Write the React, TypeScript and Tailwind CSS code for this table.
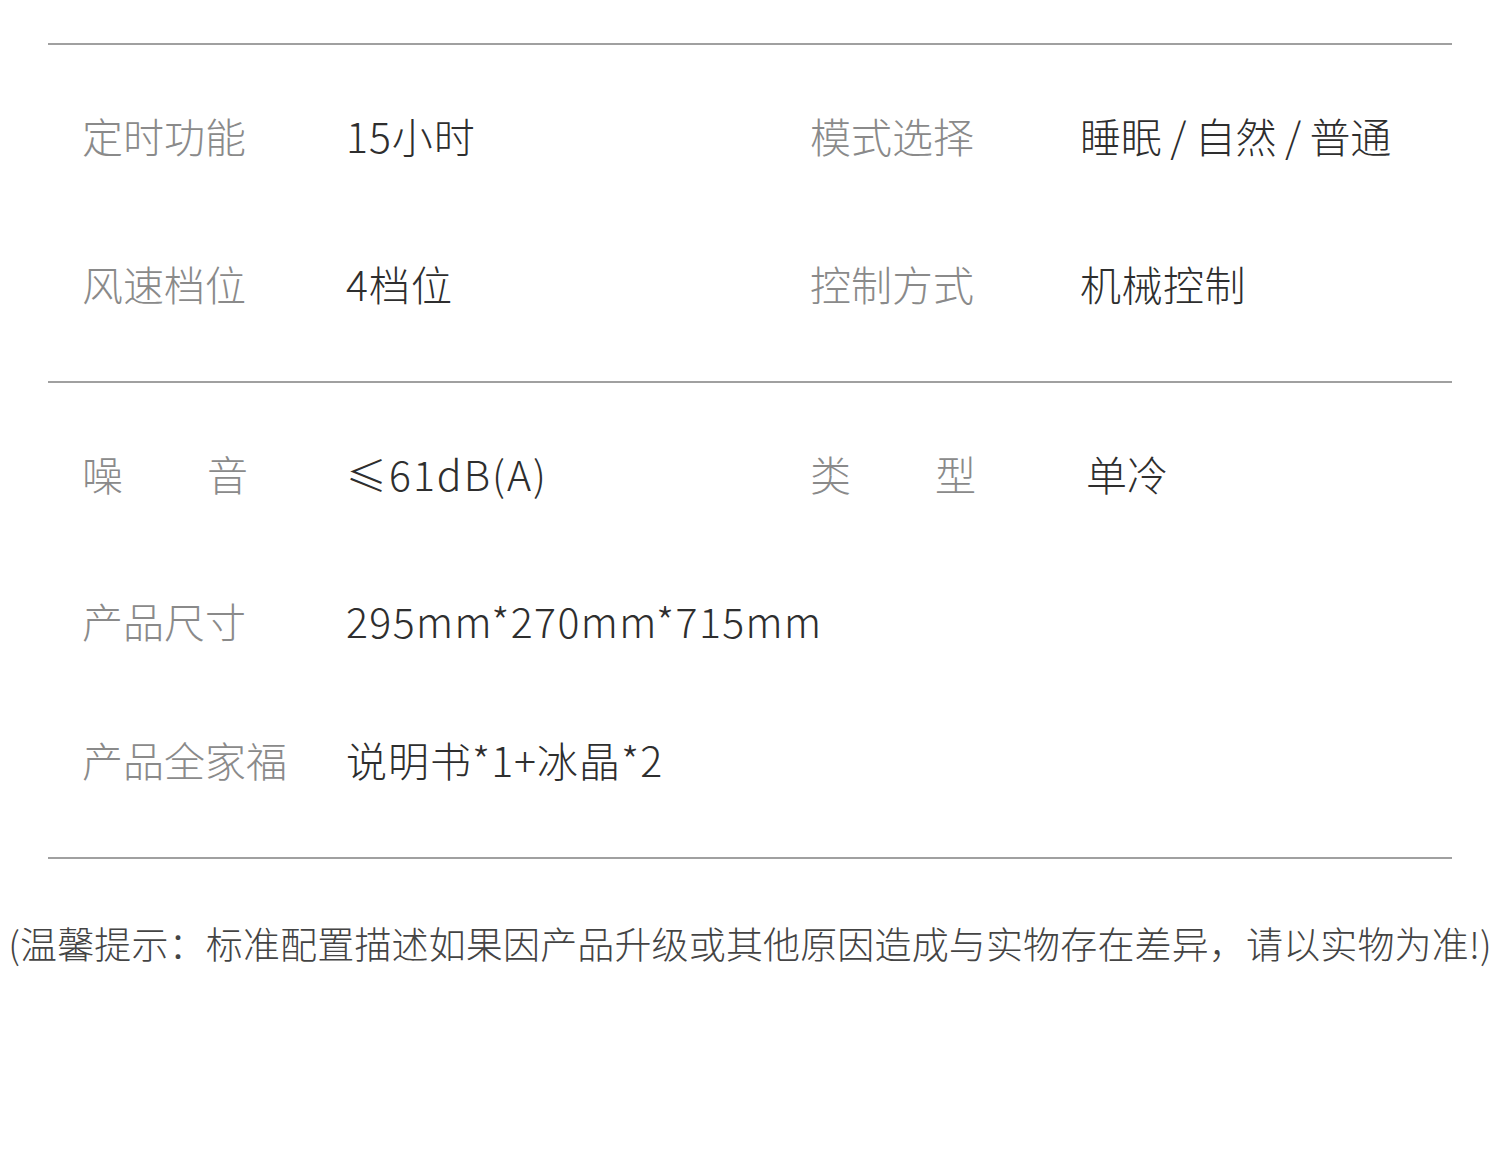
import React from "react";

const font = { fontFamily: '"Noto Sans CJK SC", "Noto Sans", sans-serif' };

function Label({ text, spaced }: { text: string; spaced?: boolean }) {
  if (spaced) {
    const chars = text.split("");
    return (
      <div className="w-[166px] flex justify-between text-[#8a8a8a]">
        {chars.map((c, i) => (
          <span key={i}>{c}</span>
        ))}
      </div>
    );
  }
  return <div className="text-[#8a8a8a] whitespace-nowrap">{text}</div>;
}

function Cell({
  label,
  value,
  spaced,
  labelW,
  valueW,
  valueCls,
}: {
  label: string;
  value: string;
  spaced?: boolean;
  labelW: string;
  valueW?: string;
  valueCls?: string;
}) {
  return (
    <div className="flex items-center">
      <div className={labelW}>
        <Label text={label} spaced={spaced} />
      </div>
      <div className={`text-[#2e2e2e] whitespace-nowrap ${valueW ?? ""} ${valueCls ?? ""}`}>{value}</div>
    </div>
  );
}

export default function App() {
  return (
    <div
      className="w-[1500px] h-[1154px] bg-white overflow-hidden text-[41px] leading-none font-light"
      style={font}
    >
      <div className="px-[48px] pt-[43px]">
        <div className="h-[2px] bg-[#a0a0a0]" />
        <div className="pl-[34px] pt-[16px] pb-[24px]">
          <div className="h-[148px] flex items-center">
            <Cell label="定时功能" value="15小时" labelW="w-[264px]" valueW="w-[464px]" valueCls="tracking-[1px]" />
            <Cell label="模式选择" value="睡眠 / 自然 / 普通" labelW="w-[270px]" valueCls="tracking-[-0.3px]" />
          </div>
          <div className="h-[148px] flex items-center">
            <Cell label="风速档位" value="4档位" labelW="w-[264px]" valueW="w-[464px]" valueCls="tracking-[1px]" />
            <Cell label="控制方式" value="机械控制" labelW="w-[270px]" valueCls="tracking-[0.5px]" />
          </div>
        </div>
        <div className="h-[2px] bg-[#a0a0a0]" />
        <div className="pl-[34px] pt-[17px] pb-[33px]">
          <div className="h-[146px] flex items-center">
            <Cell label="噪音" spaced value="≤61dB(A)" labelW="w-[264px]" valueW="w-[464px]" valueCls="tracking-[2px]" />
            <Cell label="类型" spaced value="单冷" labelW="w-[276px]" />
          </div>
          <div className="h-[148px] flex items-center">
            <Cell label="产品尺寸" value="295mm*270mm*715mm" labelW="w-[264px]" valueCls="tracking-[1.4px]" />
          </div>
          <div className="h-[130px] flex items-center">
            <Cell label="产品全家福" value="说明书*1+冰晶*2" labelW="w-[264px]" valueCls="tracking-[1px]" />
          </div>
        </div>
        <div className="h-[2px] bg-[#a0a0a0]" />
      </div>
      <div className="mt-[59px] flex justify-center">
        <div className="text-[37px] leading-[50px] text-[#444444] whitespace-nowrap tracking-[0.15px]">
          (温馨提示：标准配置描述如果因产品升级或其他原因造成与实物存在差异，请以实物为准!)
        </div>
      </div>
    </div>
  );
}
